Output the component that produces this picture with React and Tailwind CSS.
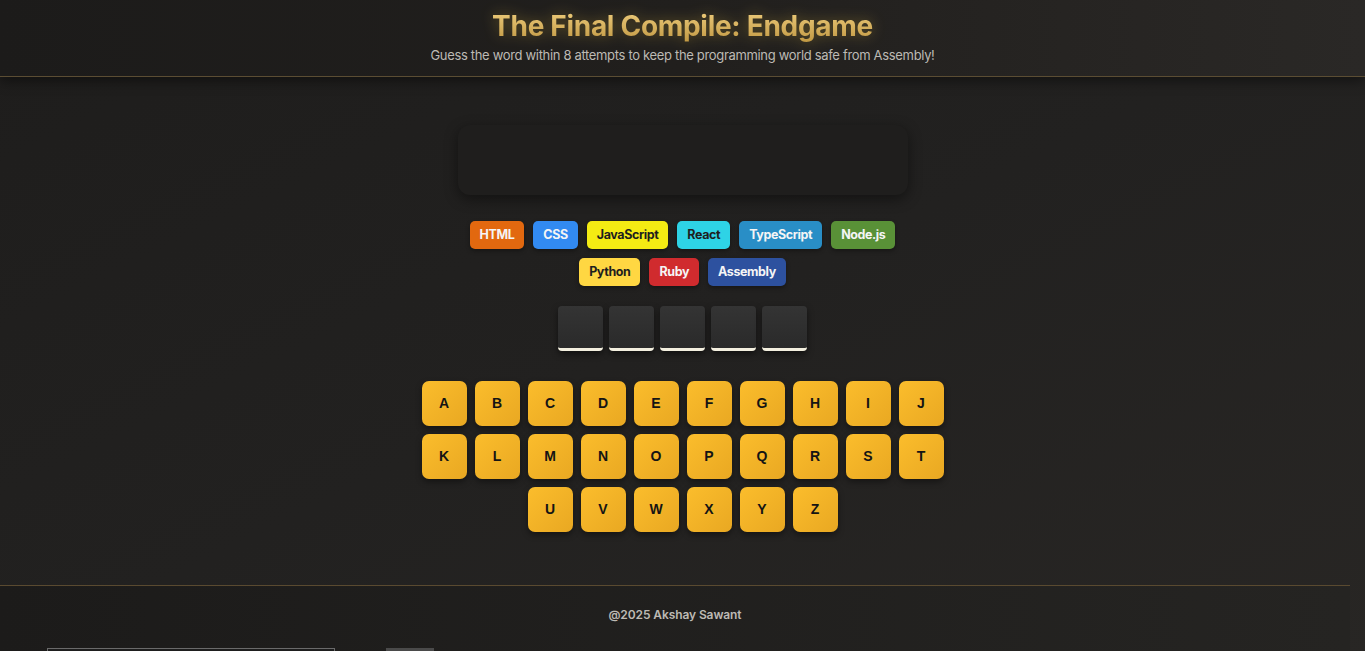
import React from "react";

const chipsRow1 = [
  { name: "HTML", bg: "bg-[#e2680f]", fg: "text-[#f5f5f5]" },
  { name: "CSS", bg: "bg-[#328af1]", fg: "text-[#f5f5f5]" },
  { name: "JavaScript", bg: "bg-[#f4eb13]", fg: "text-[#1e1e1e]" },
  { name: "React", bg: "bg-[#2ed3e6]", fg: "text-[#1e1e1e]" },
  { name: "TypeScript", bg: "bg-[#298ec6]", fg: "text-[#f5f5f5]" },
  { name: "Node.js", bg: "bg-[#599137]", fg: "text-[#f5f5f5]" },
];
const chipsRow2 = [
  { name: "Python", bg: "bg-[#ffd742]", fg: "text-[#1e1e1e]" },
  { name: "Ruby", bg: "bg-[#d02b2e]", fg: "text-[#f5f5f5]" },
  { name: "Assembly", bg: "bg-[#2d519f]", fg: "text-[#f5f5f5]" },
];

const letters = "ABCDEFGHIJKLMNOPQRSTUVWXYZ".split("");

function Chip({ c }) {
  return (
    <span
      className={`${c.bg} ${c.fg} h-[28px] px-[10px] flex items-center rounded-[5px] text-[12.5px] tracking-[-0.4px] font-bold shadow-[0_2px_4px_rgba(0,0,0,0.35)]`}
    >
      {c.name}
    </span>
  );
}

export default function App() {
  return (
    <div
      className="min-h-screen bg-gradient-to-br from-[#1e1d1c] via-[#222120] to-[#282624] text-white overflow-hidden"
      style={{ fontFamily: "Inter, 'Noto Sans', sans-serif" }}
    >
      <header className="h-[77px] border-b border-[#5b4d33] bg-gradient-to-r from-[#1c1b1a] via-[#211f1d] to-[#2a2826] flex flex-col items-center shadow-[0_4px_12px_rgba(0,0,0,0.45)]">
        <h1 className="mt-[8px] text-[28px] leading-[36px] font-bold tracking-[-0.3px] bg-gradient-to-b from-[#f0cf7f] to-[#bf963f] bg-clip-text text-transparent drop-shadow-[0_0_7px_rgba(212,175,55,0.4)]">
          The Final Compile: Endgame
        </h1>
        <p className="mt-[2px] text-[13px] leading-[18px] tracking-[-0.33px] text-[#bdbab4]">
          Guess the word within 8 attempts to keep the programming world safe from Assembly!
        </p>
      </header>

      <main className="h-[508px] flex flex-col items-center">
        <div className="mt-[48px] w-[450px] h-[70px] rounded-[12px] bg-[#1f1e1d] shadow-[0_4px_14px_rgba(0,0,0,0.45)]" />

        <div className="mt-[26px] flex flex-col items-center gap-[9px]">
          <div className="flex gap-[9px]">
            {chipsRow1.map((c) => (
              <Chip key={c.name} c={c} />
            ))}
          </div>
          <div className="flex gap-[9px]">
            {chipsRow2.map((c) => (
              <Chip key={c.name} c={c} />
            ))}
          </div>
        </div>

        <div className="mt-[20px] flex gap-[6px]">
          {[0, 1, 2, 3, 4].map((i) => (
            <div
              key={i}
              className="w-[45px] h-[45px] rounded-[4px] bg-gradient-to-b from-[#343434] to-[#2a2a2a] border-b-[3px] border-[#f3efdf] shadow-[0_3px_6px_rgba(0,0,0,0.5)]"
            />
          ))}
        </div>

        <div className="mt-[30px] w-[522px] flex flex-wrap justify-center gap-[8px]">
          {letters.map((l) => (
            <button
              key={l}
              className="w-[45px] h-[45px] rounded-[7px] bg-gradient-to-br from-[#fbbd2c] to-[#e9a822] text-[#141414] text-[14px] font-bold flex items-center justify-center shadow-[0_3px_6px_rgba(0,0,0,0.4)]"
              style={{ fontFamily: "'Liberation Sans', Arial, sans-serif" }}
            >
              {l}
            </button>
          ))}
        </div>
      </main>

      <footer className="w-[1350px] h-[80px] border-t border-[#5a4a30] bg-gradient-to-r from-[#1c1b1a] to-[#252422] flex flex-col items-center">
        <p className="mt-[20px] text-[12px] leading-[18px] tracking-[-0.1px] font-semibold text-[#bdbab4]">
          @2025 Akshay Sawant
        </p>
        <div className="self-start mt-[24px] ml-[47px] flex items-start">
          <div className="w-[288px] h-[20px] border border-[#6a6a6a] bg-[#1e1e1e]" />
          <div className="ml-[51px] w-[48px] h-[20px] bg-[#4a4a4a]" />
        </div>
      </footer>
    </div>
  );
}
